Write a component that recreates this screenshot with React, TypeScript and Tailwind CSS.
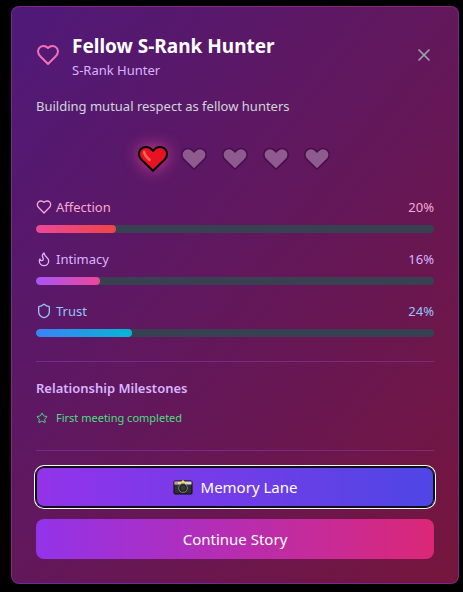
import { Flame, Shield, Star, X } from "lucide-react";

function HeartIcon({ className }: { className: string }) {
  return (
    <svg
      viewBox="0 0 24 24"
      fill="none"
      stroke="currentColor"
      strokeWidth="2"
      strokeLinecap="round"
      strokeLinejoin="round"
      className={className}
      aria-hidden="true"
    >
      <path d="M19 14c1.49-1.46 3-3.21 3-5.5A5.5 5.5 0 0 0 16.5 3c-1.76 0-3 .5-4.5 2-1.5-1.5-2.74-2-4.5-2A5.5 5.5 0 0 0 2 8.5c0 2.3 1.5 4.05 3 5.5l7 7Z" />
    </svg>
  );
}

const heartShape =
  "M16 28.6 3.4 16.4C.2 13.2.3 8.2 3.1 5.4c3-3 8-3 11 0L16 7.2l1.9-1.8c3-3 8-3 11 0 2.8 2.8 2.9 7.8-.3 11Z";

function LevelHeart({ filled }: { filled: boolean }) {
  return (
    <span className="flex w-[33px] items-center justify-center">
      {filled ? (
        <svg
          viewBox="0 0 32 32"
          className="h-[30px] w-[30px] shrink-0 overflow-visible drop-shadow-[0_0_8px_rgba(236,72,153,0.8)]"
          aria-hidden="true"
        >
          <path d={heartShape} fill="#e81224" stroke="#000" strokeWidth="2.2" strokeLinejoin="miter" />
          <path
            d="M6.6 8.4c-.2 3.2 2.8 5.8 5.8 8.6"
            fill="none"
            stroke="#f2694f"
            strokeWidth="2.8"
            strokeLinecap="round"
          />
        </svg>
      ) : (
        <svg viewBox="0 0 32 32" className="h-[26px] w-[26px] shrink-0 overflow-visible" aria-hidden="true">
          <path d={heartShape} fill="#8f5a90" stroke="#471049" strokeWidth="2" strokeLinejoin="miter" />
        </svg>
      )}
    </span>
  );
}

function CameraIcon() {
  return (
    <svg viewBox="0 0 20 16" className="h-4 w-5" aria-hidden="true">
      <rect x="1" y="2" width="18" height="13" rx="1" fill="#30302f" stroke="#0b0b0b" />
      <path d="M1.5 2.5h17v3h-17z" fill="#d8d8d8" />
      <path d="M2 3h3v2H2z" fill="#f0877b" />
      <path d="M10 .8 12.4 3.6 10 5 7.6 3.6Z" fill="#f8e412" />
      <circle cx="10" cy="9" r="4.4" fill="#242424" stroke="#8b8b8b" strokeWidth="0.8" />
      <circle cx="10" cy="9" r="2.4" fill="#3a3a3a" />
    </svg>
  );
}

const stats = [
  {
    id: "affection",
    label: "Affection",
    value: 20,
    text: "text-[#f9a8d4]",
    bar: "from-[#ec4899] to-[#ef4444]",
    icon: <HeartIcon className="h-4 w-4" />,
  },
  {
    id: "intimacy",
    label: "Intimacy",
    value: 16,
    text: "text-[#d8b4fe]",
    bar: "from-[#a855f7] to-[#ec4899]",
    icon: <Flame size={16} aria-hidden="true" />,
  },
  {
    id: "trust",
    label: "Trust",
    value: 24,
    text: "text-[#93c5fd]",
    bar: "from-[#3b82f6] to-[#06b6d4]",
    icon: <Shield size={16} aria-hidden="true" />,
  },
];

export default function App() {
  return (
    <main className="min-h-screen bg-black pt-1.5 pr-1 pb-2 pl-[11px] font-['Noto_Sans',sans-serif]">
      <section
        aria-labelledby="hunter-name"
        className="mx-auto max-w-md rounded-lg border border-[#a855f7]/30 bg-linear-to-br/srgb from-[#581c87]/90 to-[#831843]/90 p-6"
      >
        <header className="mb-4 flex items-center justify-between">
          <div className="flex items-center gap-3">
            <HeartIcon className="h-6 w-6 text-[#f472b6]" />
            <div>
              <h2 id="hunter-name" className="text-[19px] leading-[30px] font-bold text-white">
                Fellow S-Rank Hunter
              </h2>
              <p className="text-[13px] leading-[18px] text-[#d8b4fe]">S-Rank Hunter</p>
            </div>
          </div>
          <button type="button" aria-label="Close" className="text-[#9ca3af]">
            <X size={20} />
          </button>
        </header>

        <p className="mb-[26px] text-[13px] leading-[22px] text-[#d1d5db]">
          Building mutual respect as fellow hunters
        </p>

        <div className="mb-[22px] flex h-8 items-center justify-center gap-2">
          {[1, 2, 3, 4, 5].map((level) => (
            <LevelHeart key={level} filled={level === 1} />
          ))}
        </div>

        <div className="space-y-4">
          {stats.map((stat) => (
            <div key={stat.id}>
              <div className={`mb-2 flex items-center justify-between text-[13px] leading-5 ${stat.text}`}>
                <span id={stat.id} className="flex items-center gap-1">
                  {stat.icon}
                  {stat.label}
                </span>
                <span>{stat.value}%</span>
              </div>
              <div
                role="progressbar"
                aria-labelledby={stat.id}
                aria-valuenow={stat.value}
                className="h-2 overflow-hidden rounded-full bg-[#374151]"
              >
                <div className={`h-2 rounded-full bg-linear-to-r/srgb ${stat.bar}`} style={{ width: `${stat.value}%` }} />
              </div>
            </div>
          ))}
        </div>

        <div className="mt-6 border-t border-[#a855f7]/30 pt-4">
          <h3 className="mb-3 text-[13px] leading-5 font-semibold text-[#d8b4fe]">Relationship Milestones</h3>
          <p className="flex items-center gap-2 text-[11px] leading-4 text-[#4ade80]">
            <Star size={12} aria-hidden="true" />
            First meeting completed
          </p>
        </div>

        <div className="mt-6 flex flex-col gap-3 border-t border-[#a855f7]/30 pt-4">
          <button
            type="button"
            className="flex h-10 items-center justify-center gap-2 rounded-lg bg-linear-to-r/srgb from-[#9333ea] to-[#4f46e5] text-[15px] leading-6 text-white shadow-[inset_0_0_0_1px_#101010,0_0_0_1px_#101010,0_0_0_2px_#fff]"
          >
            <CameraIcon />
            Memory Lane
          </button>
          <button
            type="button"
            className="flex h-10 items-center justify-center rounded-lg bg-linear-to-r/srgb from-[#9333ea] to-[#db2777] text-[15px] leading-6 text-white"
          >
            Continue Story
          </button>
        </div>
      </section>
    </main>
  );
}
